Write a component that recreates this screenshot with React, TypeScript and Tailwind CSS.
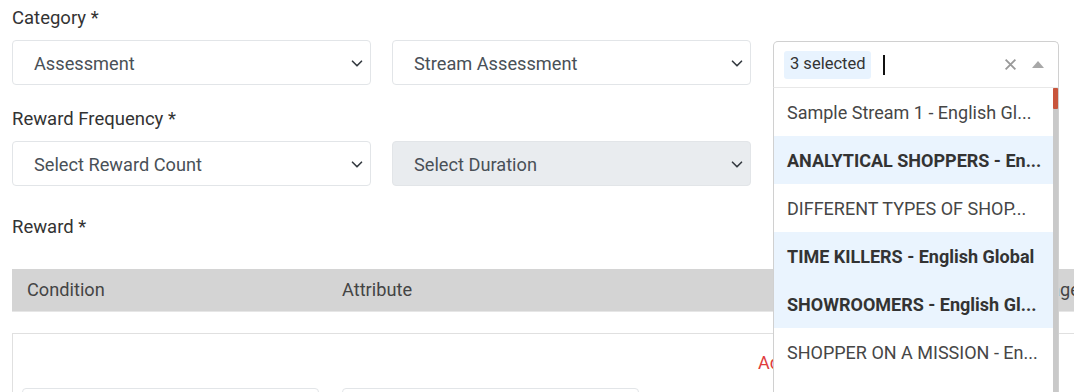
import React from "react";

const Chevron = () => (
  <svg width="12" height="9" viewBox="0 0 16 12" className="shrink-0">
    <path d="m2 3 6 6 6-6" fill="none" stroke="#343a40" strokeWidth="2.2" strokeLinecap="round" strokeLinejoin="round" />
  </svg>
);

const Select = ({ text, disabled }: { text: string; disabled?: boolean }) => (
  <div
    className={`flex items-center justify-between h-[45px] w-[359px] rounded-[4px] border border-[#e2e5e8] pl-[21px] pr-[7px] pt-[2px] text-[18.2px] text-[#495057] ${
      disabled ? "bg-[#e9ecef]" : "bg-white"
    }`}
  >
    <span>{text}</span>
    <Chevron />
  </div>
);

const items: { text: string; selected: boolean }[] = [
  { text: "Sample Stream 1 - English Gl...", selected: false },
  { text: "ANALYTICAL SHOPPERS - En...", selected: true },
  { text: "DIFFERENT TYPES OF SHOP...", selected: false },
  { text: "TIME KILLERS - English Global", selected: true },
  { text: "SHOWROOMERS - English Gl...", selected: true },
  { text: "SHOPPER ON A MISSION - En...", selected: false },
  { text: "", selected: false },
];

const MultiSelect = () => (
  <div className="relative w-[286px] mt-[1px]">
    <div className="flex items-center h-[46px] rounded-t-[5px] border border-b-0 border-[#d0d0d0] bg-white pl-[10px]">
      <span className="flex items-center h-[28px] px-[6px] rounded-[3px] bg-[#e8f3fe] text-[16.5px] text-[#333]">3 selected</span>
      <span className="ml-[12px] h-[20px] w-[1.5px] bg-[#111]" />
      <span className="flex-1" />
      <svg width="13" height="13" viewBox="0 0 12 12" className="mr-[15px]">
        <path d="M1.5 1.5 10.5 10.5 M10.5 1.5 1.5 10.5" stroke="#999" strokeWidth="1.7" />
      </svg>
      <svg width="12" height="7" viewBox="0 0 12 7" className="mr-[14px]">
        <path d="M0 7 6 0 12 7Z" fill="#a8a8a8" />
      </svg>
    </div>
    <div className="absolute left-0 top-[46px] w-[286px] h-[320px] flex bg-white border-l border-r border-[#d0d0d0] border-t border-t-[#e8e8e8]">
      <div className="flex-1 flex flex-col">
        {items.map((it, i) => (
          <div
            key={i}
            className={`h-[48px] shrink-0 flex items-center pl-[13px] text-[18px] whitespace-nowrap ${
              it.selected ? "bg-[#eaf4fe] font-bold text-[#333]" : "bg-white text-[#464646]"
            }`}
          >
            {it.text}
          </div>
        ))}
      </div>
      <div className="w-[5px] bg-[#c9c9c9] flex flex-col">
        <div className="h-[21px] bg-[#c8553c] rounded-[1px]" />
      </div>
    </div>
  </div>
);

export default function App() {
  return (
    <div className="relative w-[1074px] h-[392px] overflow-hidden bg-white font-['Roboto',sans-serif]">
      <div className="w-[1300px] pl-[12px] flex flex-col">
        <div className="mt-[7px] h-[22px] leading-[22px] text-[18.5px] text-[#333]">Category *</div>
        <div className="mt-[11px] h-[45px] flex items-start">
          <Select text="Assessment" />
          <div className="ml-[21px]">
            <Select text="Stream Assessment" />
          </div>
          <div className="ml-[22px] relative z-10">
            <MultiSelect />
          </div>
        </div>
        <div className="mt-[23px] h-[22px] leading-[22px] text-[18.5px] text-[#333]">Reward Frequency *</div>
        <div className="mt-[11px] h-[45px] flex items-start">
          <Select text="Select Reward Count" />
          <div className="ml-[21px]">
            <Select text="Select Duration" disabled />
          </div>
        </div>
        <div className="mt-[30px] h-[22px] leading-[22px] text-[18.5px] text-[#333]">Reward *</div>
        <div className="mt-[31px] h-[43px] flex items-center bg-[#d4d4d4] border-b border-[#e6e6e6] text-[18.2px] text-[#444]">
          <span className="pl-[15px] w-[330px] shrink-0">Condition</span>
          <span className="w-[646px] shrink-0">Attribute</span>
          <span className="whitespace-nowrap">Percentage</span>
        </div>
        <div className="mt-[21px] border border-[#e0e0e0] h-[120px] flex flex-col">
          <div className="pt-[17px] h-[41px] leading-[24px] pl-[745px] text-[18px] text-[#e03c3c] whitespace-nowrap">Add Condition</div>
          <div className="mt-[13px] flex pl-[9px] gap-[23px]">
            <div className="w-[297px] h-[40px] rounded-[4px] border border-[#e2e5e8]" />
            <div className="w-[297px] h-[40px] rounded-[4px] border border-[#e2e5e8]" />
          </div>
        </div>
      </div>
    </div>
  );
}
